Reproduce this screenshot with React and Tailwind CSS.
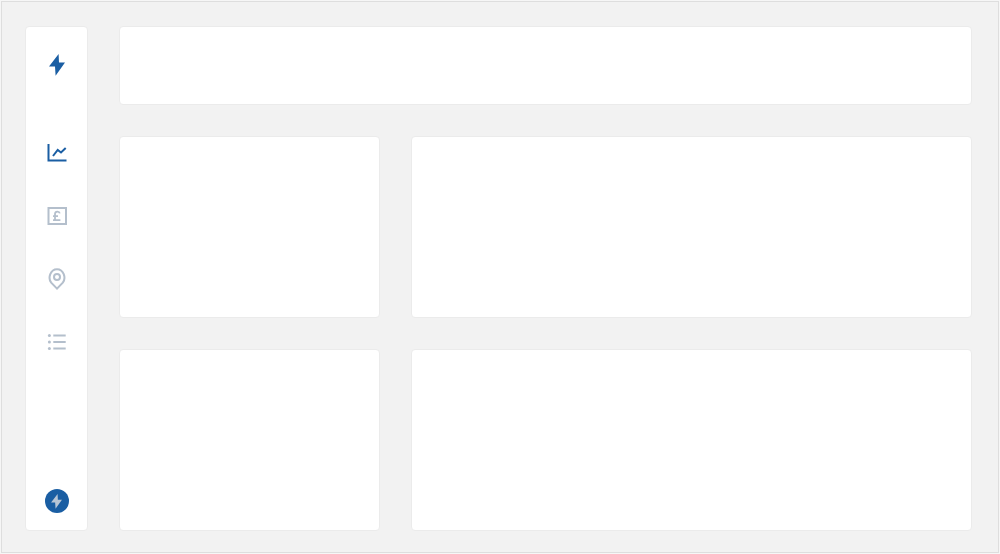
import React from 'react';

const BLUE = '#1a5ea3';
const GREY = '#b4bfcc';

const Bolt = ({ className, fill }) => (
  <svg viewBox="0 0 16 22" className={className}>
    <path d="M9.6 0 L0 12.5 L6 12.5 L6.6 21.8 L16 8.4 L10 8.4 Z" fill={fill} />
  </svg>
);

const ChartIcon = () => (
  <svg viewBox="0 0 20 20" className="w-5 h-5" fill="none" stroke={BLUE} strokeWidth="2">
    <path d="M1.5 1 V17.5 H19.5" />
    <path d="M6 13 L10.7 7 L14 9.5 L18.7 5" />
  </svg>
);

const PoundIcon = () => (
  <svg viewBox="0 0 20 18" className="w-5 h-[18px]" fill="none" stroke={GREY}>
    <rect x="1.5" y="1" width="17.5" height="16" strokeWidth="2" />
    <path d="M12.8 6.4 C12.3 3.9 8.2 3.8 8 6.8 L8 13 M6 9.2 H11 M6 13.2 H13.4" strokeWidth="1.8" />
  </svg>
);

const PinIcon = () => (
  <svg viewBox="0 0 18 22" className="w-[18px] h-[22px]" fill="none" stroke={GREY} strokeWidth="2">
    <path d="M9 20.6 L3.2 14.6 C-0.4 10 2.4 1.2 9 1.2 C15.6 1.2 18.4 10 14.8 14.6 Z" />
    <circle cx="9" cy="9" r="3" />
  </svg>
);

const ListIcon = () => (
  <svg viewBox="0 0 20 16" className="w-5 h-4" fill="none" stroke={GREY} strokeWidth="2">
    <circle cx="2.4" cy="1.5" r="1.5" fill={GREY} stroke="none" />
    <circle cx="2.4" cy="8" r="1.5" fill={GREY} stroke="none" />
    <circle cx="2.4" cy="14.5" r="1.5" fill={GREY} stroke="none" />
    <path d="M6.3 1.5 H18.7 M6.3 8 H18.7 M6.3 14.5 H18.7" />
  </svg>
);

const Card = ({ className = '' }) => (
  <div className={`bg-white border border-[#ebebeb] rounded-[4px] ${className}`} />
);

const App = () => {
  return (
    <div className="w-[1000px] h-[554px] bg-[#f6f6f6] p-px overflow-hidden">
      <div className="h-full bg-[#f2f2f2] border border-[#dedede] pl-[23px] pt-6 flex gap-[31px]">
        <aside className="w-[63px] h-[505px] bg-white border border-[#ebebeb] rounded-[4px] flex flex-col items-center">
          <Bolt className="w-4 h-[22px] mt-[27px]" fill={BLUE} />
          <div className="mt-[67px] flex flex-col items-center">
            <div className="h-5 flex items-center"><ChartIcon /></div>
            <div className="h-5 mt-[43px] flex items-center"><PoundIcon /></div>
            <div className="h-[22px] mt-[42px] flex items-center"><PinIcon /></div>
            <div className="h-4 mt-[44px] flex items-center"><ListIcon /></div>
          </div>
          <div className="mt-auto mb-[17px] w-6 h-6 rounded-full bg-[#1a5ea3] flex items-center justify-center">
            <Bolt className="w-[11px] h-[15px]" fill="#b8c6d6" />
          </div>
        </aside>
        <main className="w-[853px] h-[505px] grid grid-cols-[261px_561px] grid-rows-[79px_182px_182px] gap-[31px]">
          <Card className="col-span-2" />
          <Card />
          <Card />
          <Card />
          <Card />
        </main>
      </div>
    </div>
  );
};

export default App;
